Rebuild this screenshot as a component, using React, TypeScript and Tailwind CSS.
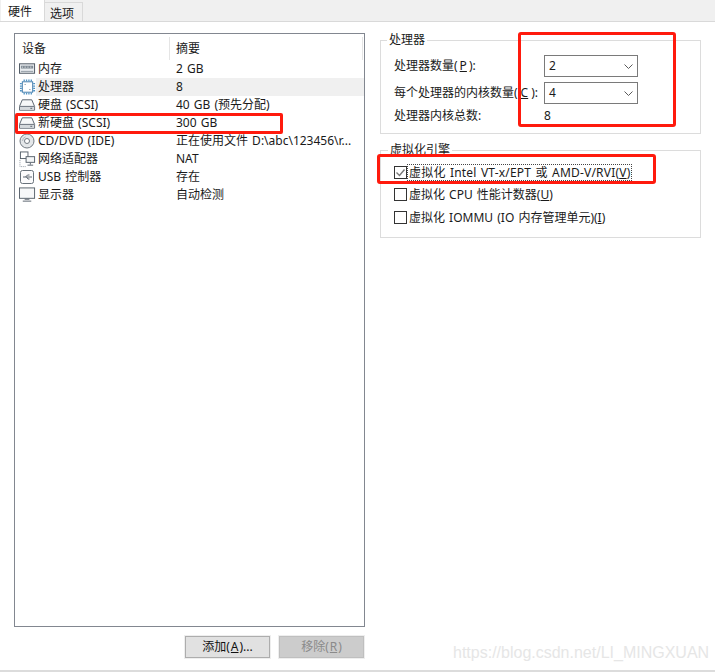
const font = { fontFamily: '"Noto Sans", "Noto Sans CJK SC", sans-serif' }

function MemoryIcon() {
  return (
    <svg width="18" height="14" viewBox="0 0 18 14" fill="none">
      <rect x="0.5" y="1.5" width="16" height="10" fill="#e8ecef" stroke="#4b5560" />
      <rect x="2" y="3.5" width="13" height="3" fill="#7f8a94" />
      <path d="M3 5h1M6 5h1M9 5h1M12 5h1" stroke="#fff" />
      <path d="M2 9.5h13" stroke="#8d97a0" />
    </svg>
  )
}

function CpuIcon() {
  return (
    <svg width="18" height="18" viewBox="0 0 18 18" fill="none">
      <rect x="3.5" y="3.5" width="11" height="11" fill="#fff" stroke="#3d78a8" />
      <path d="M5.5 1v2M8 1v2M10.5 1v2M13 1v2M5.5 15v2M8 15v2M10.5 15v2M13 15v2M1 5.5h2M1 8h2M1 10.5h2M1 13h2M15 5.5h2M15 8h2M15 10.5h2M15 13h2" stroke="#4e92c4" strokeWidth="1.4" />
      <path d="M6 6h1v1H6zM11 11h1v1h-1z" fill="#35556e" />
    </svg>
  )
}

function DiskIcon() {
  return (
    <svg width="18" height="14" viewBox="0 0 18 14" fill="none">
      <path d="M3.5 1.5h10l3 7v4h-16v-4z" fill="#f7f8f9" stroke="#56606a" />
      <path d="M1 8.5h15" stroke="#56606a" />
      <rect x="1" y="9" width="15" height="3" fill="#d5d9dd" />
      <path d="M12 10.5h2" stroke="#56606a" />
    </svg>
  )
}

function CdIcon() {
  return (
    <svg width="16" height="16" viewBox="0 0 16 16" fill="none">
      <circle cx="8" cy="8" r="7" fill="#e4e7e9" stroke="#737b83" />
      <circle cx="8" cy="8" r="2.5" fill="#fff" stroke="#737b83" />
      <path d="M3.5 8a4.5 4.5 0 0 1 3-4.2" stroke="#b4babf" />
    </svg>
  )
}

function NetIcon() {
  return (
    <svg width="18" height="17" viewBox="0 0 18 17" fill="none">
      <rect x="1.5" y="0.5" width="8" height="7" fill="#fff" stroke="#56606a" />
      <rect x="7.5" y="5.5" width="9" height="6" fill="#f4f6f7" stroke="#56606a" />
      <path d="M12 12v2M9 14.5h6" stroke="#56606a" />
      <path d="M1 9v7h7" stroke="#8d97a0" strokeDasharray="1 1" />
    </svg>
  )
}

function UsbIcon() {
  return (
    <svg width="16" height="16" viewBox="0 0 16 16" fill="none">
      <rect x="1.5" y="1.5" width="13" height="13" rx="2" fill="#fbfbfc" stroke="#68727b" />
      <path d="M4 8h8M6.5 8l2-2h2M7.5 8l1.5 2h1.5" stroke="#5c6670" />
      <path d="M12 7v2l1-1z" fill="#5c6670" />
    </svg>
  )
}

function MonitorIcon() {
  return (
    <svg width="18" height="16" viewBox="0 0 18 16" fill="none">
      <rect x="0.5" y="0.5" width="16" height="11" fill="#f7f8f9" stroke="#56606a" />
      <path d="M6 12.5h5M4 14.5h9" stroke="#56606a" />
    </svg>
  )
}

const devices = [
  { icon: <MemoryIcon />, name: '内存', summary: '2 GB' },
  { icon: <CpuIcon />, name: '处理器', summary: '8', selected: true },
  { icon: <DiskIcon />, name: '硬盘 (SCSI)', summary: '40 GB (预先分配)' },
  { icon: <DiskIcon />, name: '新硬盘 (SCSI)', summary: '300 GB' },
  { icon: <CdIcon />, name: 'CD/DVD (IDE)', summary: '正在使用文件 D:\\abc\\123456\\r...' },
  { icon: <NetIcon />, name: '网络适配器', summary: 'NAT' },
  { icon: <UsbIcon />, name: 'USB 控制器', summary: '存在' },
  { icon: <MonitorIcon />, name: '显示器', summary: '自动检测' },
]

function Select({ value }: { value: string }) {
  return (
    <div className="w-[94px] h-[22px] border border-[#7a7a7a] bg-white flex items-center justify-between pl-1 pr-[4px]">
      <span>{value}</span>
      <svg width="9" height="5" viewBox="0 0 9 5" fill="none">
        <path d="M0.5 0.5L4.5 4.5L8.5 0.5" stroke="#5a5a5a" />
      </svg>
    </div>
  )
}

function Check({ checked, children, focus }: { checked?: boolean; children: React.ReactNode; focus?: boolean }) {
  return (
    <div className="flex items-center h-[22.5px] pl-[13px]">
      <div className="w-[13px] h-[13px] border border-[#333] bg-white flex items-center justify-center shrink-0">
        {checked && (
          <svg width="11" height="11" viewBox="0 0 11 11" fill="none">
            <path d="M1.5 5.5L4.5 8.5L9.5 2.5" stroke="#777" strokeWidth="1.4" />
          </svg>
        )}
      </div>
      <span className={`px-[1px] leading-[15px] whitespace-nowrap border border-dotted [word-spacing:1px] ${focus ? 'border-[#444] tracking-[0.2px]' : 'border-transparent'}`}>
        {children}
      </span>
    </div>
  )
}

export default function App() {
  return (
    <div className="relative w-[715px] h-[672px] bg-white overflow-hidden text-[12px] text-[#1a1a1a] border-b-2 border-[#dcdcdc]" style={font}>
      {/* Tabs */}
      <div className="h-[22px] bg-[#f0f0f0] border-b border-[#d9d9d9] flex items-end pl-[1px]">
        <div className="w-[44px] h-[22px] bg-white border-r border-[#d9d9d9] pl-[7px] pt-[2px] text-[12px] leading-[22px] z-10">硬件</div>
        <div className="w-[38px] h-[20px] mb-[-1px] border-t border-r border-[#d9d9d9] pl-[5px] leading-[21px]">选项</div>
      </div>

      <div className="flex pt-[11px] pl-[14px]">
        {/* Left column */}
        <div className="w-[351px]">
          <div className="h-[594px] border border-[#828790] bg-white pt-[3px]">
            <div className="flex h-[23px] items-center">
              <div className="w-[155px] h-full pl-[7px] flex items-center border-r border-[#e5e5e5]">设备</div>
              <div className="pl-[6px] flex-1 h-full flex items-center border-r border-[#e5e5e5] mr-[1px]">摘要</div>
            </div>
            {devices.map((d) => (
              <div key={d.name} className="flex h-[18px] items-center whitespace-nowrap">
                <span className="w-[21px] pl-[4px] flex items-center shrink-0">{d.icon}</span>
                <div className={`flex flex-1 h-full items-center pl-[2px] [word-spacing:1px] ${d.selected ? 'bg-[#f0f0f0]' : ''}`}>
                  <span className="w-[133px] shrink-0">{d.name}</span>
                  <span className="pl-[5px]">{d.summary}</span>
                </div>
              </div>
            ))}
          </div>
          <div className="flex justify-end gap-[9px] mt-[9px] pr-[1px]">
            <div className="w-[85px] h-[22px] border border-[#adadad] bg-[#e1e1e1] flex items-center justify-center text-[#111] ring-1 ring-[#eeeeee]">添加(<u className="mx-[1px]">A</u>)...</div>
            <div className="w-[85px] h-[22px] border border-[#bfbfbf] bg-[#cccccc] flex items-center justify-center text-[#8a8a8a] ring-1 ring-[#eeeeee]">移除(<u className="mx-[1px]">R</u>)</div>
          </div>
        </div>

        {/* Right column */}
        <div className="w-[321px] ml-[15px]">
          <fieldset className="h-[101px] border border-[#dcdcdc] px-[13px] relative">
            <legend className="ml-[-7px] px-[2px] leading-[14px]">处理器</legend>
            <div className="flex items-center h-[22px] mt-[8px]">
              <span className="w-[150px] whitespace-nowrap">处理器数量(<u className="mx-[2px]">P</u>):</span>
              <Select value="2" />
            </div>
            <div className="flex items-center h-[22px] mt-[5px]">
              <span className="w-[150px] whitespace-nowrap">每个处理器的内核数量(<u className="mx-[3px]">C</u>):</span>
              <Select value="4" />
            </div>
            <div className="flex items-center h-[18px] mt-[3px]">
              <span className="w-[150px] whitespace-nowrap">处理器内核总数:</span>
              <span>8</span>
            </div>
          </fieldset>
          <fieldset className="h-[95px] mt-[9px] border border-[#dcdcdc] pt-[4px]">
            <legend className="ml-[7px] px-[2px] leading-[14px]">虚拟化引擎</legend>
            <Check checked focus>虚拟化 Intel VT-x/EPT 或 AMD-V/RVI(<u>V</u>)</Check>
            <Check>虚拟化 CPU 性能计数器(<u>U</u>)</Check>
            <Check>虚拟化 IOMMU (IO 内存管理单元)(<u>I</u>)</Check>
          </fieldset>
        </div>
      </div>

      {/* Red annotation boxes drawn on top of the screenshot */}
      <div className="absolute left-[15px] top-[113px] w-[268px] h-[21px] border-[3px] border-[#ff1a0d] rounded-[2px]" />
      <div className="absolute left-[518px] top-[32px] w-[158px] h-[95px] border-[3px] border-[#ff1a0d] rounded-[3px]" />
      <div className="absolute left-[377px] top-[154px] w-[279px] h-[30px] border-[3px] border-[#ff1a0d] rounded-[3px]" />

      {/* Watermark */}
      <div className="absolute left-[453px] top-[643px] text-[16px] leading-[20px] text-[#e6e6e6] whitespace-nowrap" style={{ fontFamily: '"Liberation Sans", sans-serif' }}>
        https://blog.csdn.net/LI_MINGXUAN
      </div>
    </div>
  )
}
